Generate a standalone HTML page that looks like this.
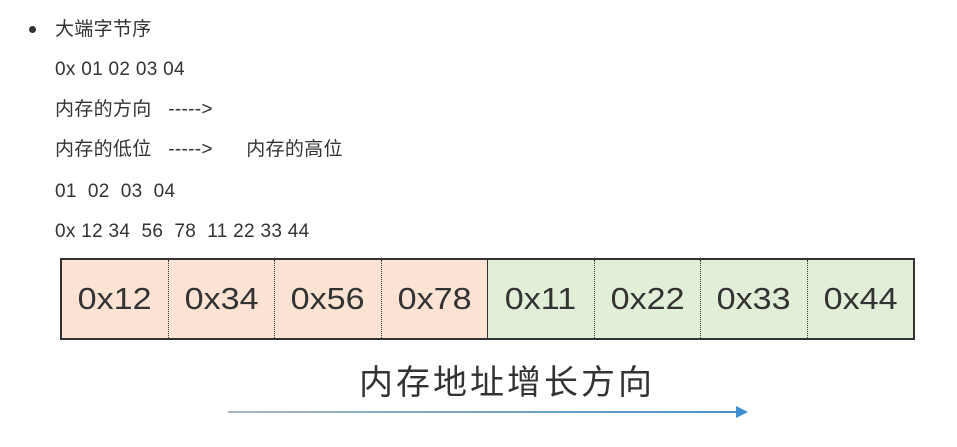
<!DOCTYPE html><html><head><meta charset="utf-8"><style>
body{margin:0;width:957px;height:447px;background:#fff;position:relative;font-family:"Liberation Sans","Noto Sans CJK SC",sans-serif;color:#333;overflow:hidden}
.t{position:absolute;left:55px;font-size:19px;line-height:22px;white-space:pre;letter-spacing:0.3px}
.dot{position:absolute;left:29px;top:26px;width:7px;height:7px;border-radius:50%;background:#333}
.box{position:absolute;left:60px;top:258px;width:851px;height:78px;border:2px solid #333;display:flex}
.c{flex:1;font-size:31px;line-height:78px;text-align:center;color:#333;border-right:1px dotted #333;transform-origin:center}
.c span{display:inline-block;transform:scaleX(1.1)}
.o{background:#fde3d3}.g{background:#e2efd8}
.c:last-child{border-right:none}.s{border-right:1.5px solid #333}
</style></head><body>
<div class="dot"></div>
<div class="t" style="top:19px">大端字节序</div>
<div class="t" style="top:59px">0x 01 02 03 04</div>
<div class="t" style="top:99px">内存的方向   -----&gt;</div>
<div class="t" style="top:139px">内存的低位   -----&gt;      内存的高位</div>
<div class="t" style="top:181px">01  02  03  04</div>
<div class="t" style="top:221px">0x 12 34  56  78  11 22 33 44</div>
<div class="box"><div class="c o"><span>0x12</span></div><div class="c o"><span>0x34</span></div><div class="c o"><span>0x56</span></div><div class="c o s"><span>0x78</span></div><div class="c g"><span>0x11</span></div><div class="c g"><span>0x22</span></div><div class="c g"><span>0x33</span></div><div class="c g"><span>0x44</span></div></div>
<div style="position:absolute;left:359px;top:362px;font-size:34px;line-height:42px;color:#333;letter-spacing:3px">内存地址增长方向</div>
<div style="position:absolute;left:228px;top:411px;width:510px;height:2px;background:linear-gradient(90deg,#a9b8bd,#4a90c8)"></div>
<div style="position:absolute;left:736px;top:406px;width:0;height:0;border-left:12px solid #3d8fd0;border-top:6px solid transparent;border-bottom:6px solid transparent"></div>
</body></html>
